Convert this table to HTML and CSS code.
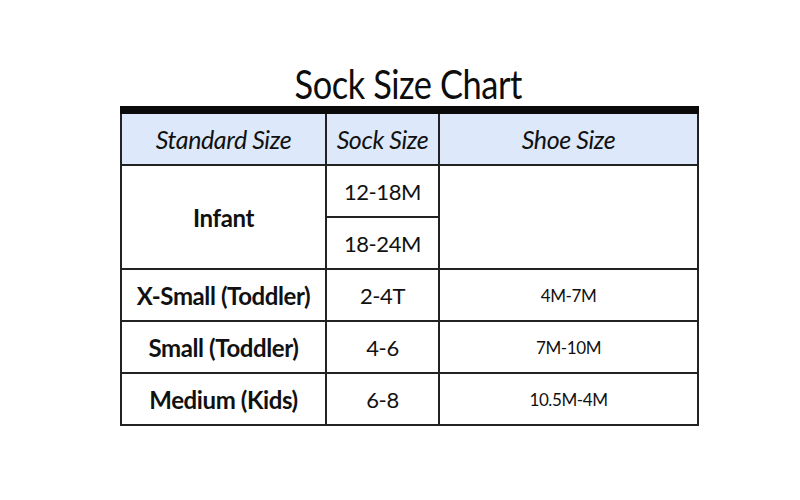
FILE: index.html
```html
<!DOCTYPE html>
<html>
<head>
<meta charset="utf-8">
<link rel="stylesheet" href="styles.css">
</head>
<body>
<div class="page">
  <h1 class="title">Sock Size Chart</h1>
  <table class="chart">
    <colgroup>
      <col class="c1"><col class="c2"><col class="c3">
    </colgroup>
    <thead>
      <tr><th>Standard Size</th><th>Sock Size</th><th>Shoe Size</th></tr>
    </thead>
    <tbody>
      <tr class="half"><td rowspan="2" class="std">Infant</td><td class="sock">12-18M</td><td rowspan="2"></td></tr>
      <tr class="half"><td class="sock">18-24M</td></tr>
      <tr><td class="std">X-Small (Toddler)</td><td class="sock">2-4T</td><td class="shoe">4M-7M</td></tr>
      <tr><td class="std">Small (Toddler)</td><td class="sock">4-6</td><td class="shoe">7M-10M</td></tr>
      <tr><td class="std">Medium (Kids)</td><td class="sock">6-8</td><td class="shoe">10.5M-4M</td></tr>
    </tbody>
  </table>
</div>
</body>
</html>
```

FILE: styles.css
```css
html, body {
  margin: 0;
  padding: 0;
  background: #ffffff;
}
body {
  font-family: Lato, "Noto Sans", "Liberation Sans", sans-serif;
  color: #111111;
}
.page {
  width: 800px;
  height: 500px;
  display: flex;
  flex-direction: column;
  align-items: center;
  padding-top: 62px;
  box-sizing: border-box;
}
.title {
  margin: 0 0 0 16px;
  font-weight: 400;
  font-size: 40px;
  line-height: 44px;
  letter-spacing: -0.5px;
  color: #0d0d0d;
  transform: scaleX(0.86);
}
.chart {
  border-collapse: collapse;
  margin-left: 19px;
  border: 2px solid #222222;
  border-top: 8px solid #0a0a0a;
}
.c1 { width: 205px; }
.c2 { width: 113px; }
.c3 { width: 259px; }
.chart th, .chart td {
  border: 2px solid #222222;
  text-align: center;
  vertical-align: middle;
  padding: 0;
  font-size: 22px;
  letter-spacing: -0.4px;
}
.chart th {
  background: #dde9fa;
  font-weight: 400;
  font-style: italic;
  font-size: 25px;
  height: 50px;
}
.chart td {
  height: 50px;
}
.std {
  font-size: 24px !important;
  font-weight: 700;
}
.sock {
  font-weight: 400;
}
.shoe {
  font-size: 17px !important;
}
```
